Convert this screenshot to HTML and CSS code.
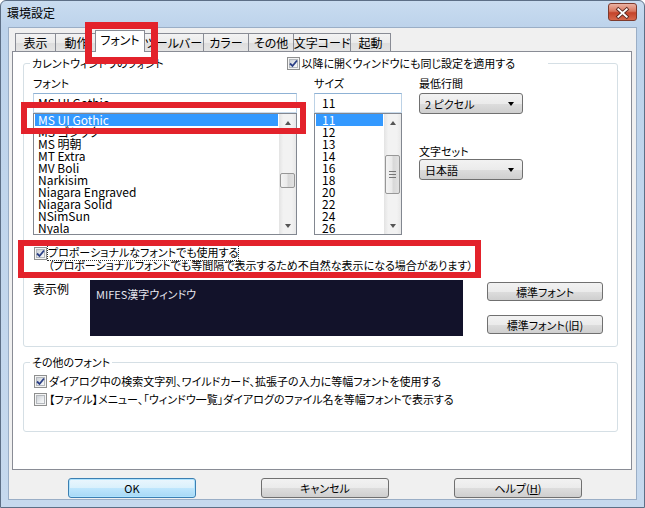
FILE: index.html
```html
<!DOCTYPE html>
<html lang="ja">
<head>
  <meta charset="UTF-8">
  <title>環境設定</title>
  <link rel="stylesheet" href="styles.css">
</head>
<body>
  <div class="window">
    <div class="titlebar">
      <span class="title">環境設定</span>
      <span class="close">
        <svg width="29" height="18" viewBox="0 0 29 18">
          <path d="M10 5 L19 13 M19 5 L10 13" stroke="#5a2a22" stroke-width="4" stroke-linecap="square"/>
          <path d="M10 5 L19 13 M19 5 L10 13" stroke="#fff" stroke-width="2" stroke-linecap="square"/>
        </svg>
      </span>
    </div>
    <div class="client">
      <div class="tabs">
        <div class="tab w1">表示</div>
        <div class="tab w2">動作</div>
        <div class="tab w3 active">フォント</div>
        <div class="tab w4">ツールバー</div>
        <div class="tab w5">カラー</div>
        <div class="tab w6">その他</div>
        <div class="tab w7">文字コード</div>
        <div class="tab w8">起動</div>
      </div>
      <div class="panel">
        <div class="group g1">
          <div class="group-head wide">
            <span class="legend">カレントウィンドウのフォント</span>
            <label class="check">
              <span class="box checked"><svg width="9" height="9" viewBox="0 0 9 9"><path d="M1 4.5 L3.5 7 L8 1.5" fill="none" stroke="#2b3f86" stroke-width="1.8"/></svg></span>
              以降に開くウィンドウにも同じ設定を適用する
            </label>
          </div>
          <div class="font-grid">
            <div class="col">
              <div class="lbl">フォント</div>
              <div class="edit">MS UI Gothic</div>
              <div class="listbox">
                <div class="items">
                  <div class="item sel">MS UI Gothic</div>
                  <div class="item">MS ゴシック</div>
                  <div class="item">MS 明朝</div>
                  <div class="item">MT Extra</div>
                  <div class="item">MV Boli</div>
                  <div class="item">Narkisim</div>
                  <div class="item">Niagara Engraved</div>
                  <div class="item">Niagara Solid</div>
                  <div class="item">NSimSun</div>
                  <div class="item">Nyala</div>
                </div>
                <div class="vscroll">
                  <div class="arrow up"></div>
                  <div class="track"><div class="thumb small"></div></div>
                  <div class="arrow down"></div>
                </div>
              </div>
            </div>
            <div class="col">
              <div class="lbl">サイズ</div>
              <div class="edit num">11</div>
              <div class="listbox">
                <div class="items nums">
                  <div class="item sel">11</div>
                  <div class="item">12</div>
                  <div class="item">13</div>
                  <div class="item">14</div>
                  <div class="item">16</div>
                  <div class="item">18</div>
                  <div class="item">20</div>
                  <div class="item">22</div>
                  <div class="item">24</div>
                  <div class="item">26</div>
                </div>
                <div class="vscroll">
                  <div class="arrow up"></div>
                  <div class="track"><div class="thumb big"><span class="grip"></span></div></div>
                  <div class="arrow down"></div>
                </div>
              </div>
            </div>
            <div class="col">
              <div class="lbl">最低行間</div>
              <div class="combo">2 ピクセル</div>
              <div class="lbl second">文字セット</div>
              <div class="combo">日本語</div>
            </div>
          </div>
          <div class="prop">
            <span class="box checked"><svg width="9" height="9" viewBox="0 0 9 9"><path d="M1 4.5 L3.5 7 L8 1.5" fill="none" stroke="#2b3f86" stroke-width="1.8"/></svg></span>
            <div class="prop-text">
              <div><span class="focus">プロポーショナルなフォントでも使用する</span></div>
              <div>（プロポーショナルフォントでも等間隔で表示するため不自然な表示になる場合があります）</div>
            </div>
          </div>
          <div class="sample-row">
            <div class="sample-lbl">表示例</div>
            <div class="sample">MIFES漢字ウィンドウ</div>
            <div class="side-btns">
              <div class="btn">標準フォント</div>
              <div class="btn">標準フォント(旧)</div>
            </div>
          </div>
        </div>
        <div class="group g2">
          <div class="group-head">
            <span class="legend">その他のフォント</span>
          </div>
          <label class="check row">
            <span class="box checked"><svg width="9" height="9" viewBox="0 0 9 9"><path d="M1 4.5 L3.5 7 L8 1.5" fill="none" stroke="#2b3f86" stroke-width="1.8"/></svg></span>
            ダイアログ中の検索文字列、ワイルドカード、拡張子の入力に等幅フォントを使用する
          </label>
          <label class="check row">
            <span class="box"></span>
            【ファイル】メニュー、「ウィンドウ一覧」ダイアログのファイル名を等幅フォントで表示する
          </label>
        </div>
      </div>
      <div class="buttons">
        <div class="btn big default">OK</div>
        <div class="btn big">キャンセル</div>
        <div class="btn big">ヘルプ(<u>H</u>)</div>
      </div>
    </div>
    <div class="mark m1"></div>
    <div class="mark m2"></div>
    <div class="mark m3"></div>
  </div>
</body>
</html>
```

FILE: styles.css
```css
:root {
  --frame: #c4d8ee;
  --client: #f0f0f0;
  --tab-border: #898c95;
  --group-border: #d5dfe5;
  --select: #3399ff;
  --red: #e3222b;
}
body {
  margin: 0;
  width: 645px;
  height: 508px;
  overflow: hidden;
  font-family: "Noto Sans CJK JP", "Liberation Sans", sans-serif;
  font-size: 11px;
  font-feature-settings: "palt" 1;
  color: #000;
}
.window {
  position: relative;
  width: 645px;
  height: 508px;
  box-sizing: border-box;
  border: 1px solid #5d6f86;
  border-radius: 6px 6px 0 0;
  background: linear-gradient(#c9dcf0, #bdd3eb 26px, #c6d9ee);
  padding: 0 7px 7px 7px;
  display: flex;
  flex-direction: column;
}
.titlebar {
  height: 26px;
  display: flex;
  justify-content: space-between;
}
.title {
  font-size: 12px;
  line-height: 24px;
  margin-left: -1px;
}
.close {
  width: 29px;
  height: 18px;
  margin-top: 2px;
  box-sizing: border-box;
  border: 1px solid #7e3a2c;
  border-radius: 3px;
  background: linear-gradient(#eab2a3, #d9775f 45%, #c4432a 55%, #d6684b);
  display: flex;
}
.client {
  flex: 1;
  background: var(--client);
  border: 1px solid #9aaec6;
  padding: 3px 4px 0 3px;
  display: flex;
  flex-direction: column;
}

/* tabs */
.tabs {
  display: flex;
  align-items: flex-end;
  height: 20px;
  padding-left: 3px;
  position: relative;
  z-index: 1;
}
.tab {
  height: 18px;
  box-sizing: border-box;
  border: 1px solid var(--tab-border);
  border-bottom: none;
  border-right: none;
  background: linear-gradient(#f3f3f3, #ebebeb 50%, #dddddd 51%, #e4e4e4);
  display: flex;
  align-items: center;
  justify-content: center;
  line-height: 14px;
  font-size: 12px;
  white-space: nowrap;
}
.tab.w8 { border-right: 1px solid var(--tab-border); }
.w1 { width: 40px; }
.w2 { width: 42px; }
.w3 { width: 47px; }
.w4 { width: 59px; }
.w5 { width: 45px; }
.w6 { width: 45px; }
.w7 { width: 57px; }
.w8 { width: 41px; }
.tab.active {
  width: 50px;
  height: 22px;
  margin: 0 -1px -1px -2px;
  background: #fff;
  border-right: 1px solid var(--tab-border);
  position: relative;
  align-items: flex-start;
  padding-top: 2px;
}
.tab.active + .tab { border-left: none; }

.panel {
  height: 419px;
  box-sizing: border-box;
  border: 1px solid var(--tab-border);
  background: #fff;
  padding: 11px 13px 0 10px;
}

/* group boxes */
.group {
  border: 1px solid var(--group-border);
  border-radius: 3px;
  padding: 0 0 0 9px;
}
.group-head {
  height: 14px;
  margin: -8px 0 0 -3px;
  line-height: 14px;
  display: flex;
}
.group-head.wide {
  width: 518px;
  background: #fff;
}
.legend {
  background: #fff;
  padding: 0 2px;
}
.group-head .check {
  margin-left: 121px;
}
.check {
  display: flex;
  align-items: center;
  gap: 2px;
}
.box {
  width: 13px;
  height: 13px;
  flex: none;
  box-sizing: border-box;
  border: 1px solid #8e8f8f;
  background: #f4f4f4;
  position: relative;
}
.box::before {
  content: "";
  position: absolute;
  inset: 1px;
  border: 1px solid #b4b8bd;
  background: linear-gradient(135deg, #cdd1d6, #eef0f2 70%, #f8f8f8);
}
.box svg {
  position: absolute;
  left: 1px;
  top: 1px;
}

.g1 { height: 284px; box-sizing: border-box; }
.font-grid {
  display: grid;
  grid-template-columns: 264px 88px 104px;
  column-gap: 17px;
  margin-top: 6px;
}
.lbl {
  height: 17px;
  line-height: 14px;
}
.lbl.second {
  margin-top: 30px;
  height: 15px;
}
.edit {
  height: 20px;
  box-sizing: border-box;
  border: 1px solid;
  border-color: #8fb2d5 #bcd2e6 #c9dbec #bcd2e6;
  padding: 0 4px;
  line-height: 18px;
  font-size: 12px;
  background: #fff;
}
.edit.num { padding-left: 7px; }
.listbox {
  height: 122px;
  box-sizing: border-box;
  border: 1px solid #828790;
  display: flex;
  background: #fff;
}
.items {
  flex: 1;
  padding: 0 1px;
  overflow: hidden;
  font-size: 12px;
}
.item {
  height: 12px;
  line-height: 12px;
  padding-left: 3px;
  white-space: nowrap;
}
.nums .item { padding-left: 6px; }
.item.sel {
  background: var(--select);
  color: #fff;
}
.vscroll {
  width: 17px;
  display: flex;
  flex-direction: column;
  background: linear-gradient(to right, #e3e3e3, #f2f2f2 25%, #f2f2f2 75%, #e8e8e8);
}
.arrow {
  height: 17px;
  display: flex;
  align-items: center;
  justify-content: center;
}
.arrow::after {
  content: "";
  border-left: 3.5px solid transparent;
  border-right: 3.5px solid transparent;
}
.arrow.up::after { border-bottom: 4px solid #555; }
.arrow.down::after { border-top: 4px solid #555; }
.track {
  flex: 1;
  padding: 0 1px;
}
.thumb {
  box-sizing: border-box;
  border: 1px solid #979797;
  border-radius: 2px;
  background: linear-gradient(to right, #f3f3f3, #eaeaea 45%, #d8d8d8 55%, #e2e2e2);
  display: flex;
  align-items: center;
  justify-content: center;
}
.thumb.small { height: 15px; margin-top: 42px; }
.thumb.big { height: 39px; margin-top: 24px; }
.grip {
  width: 7px;
  height: 5px;
  border-top: 1px solid #777;
  border-bottom: 1px solid #777;
  position: relative;
}
.grip::after {
  content: "";
  position: absolute;
  left: 0;
  right: 0;
  top: 2px;
  border-top: 1px solid #777;
}
.combo {
  height: 21px;
  box-sizing: border-box;
  border: 1px solid #707070;
  border-radius: 3px;
  background: linear-gradient(#f2f2f2, #ebebeb 50%, #dddddd 51%, #cfcfcf);
  padding: 0 8px 0 5px;
  display: flex;
  align-items: center;
  justify-content: space-between;
}
.combo::after {
  content: "";
  border-left: 3.5px solid transparent;
  border-right: 3.5px solid transparent;
  border-top: 4px solid #000;
}

.prop {
  display: flex;
  gap: 1px;
  margin-top: 11px;
  margin-left: 1px;
}
.prop .box { margin-top: 1px; }
.prop-text { line-height: 13px; }
.focus { outline: 1px dotted #333; }
.sample-row {
  display: flex;
  margin-top: 8px;
}
.sample-lbl {
  width: 57px;
  padding-top: 2px;
  line-height: 14px;
  font-size: 12px;
}
.sample {
  width: 373px;
  height: 56px;
  box-sizing: border-box;
  background: #12122a;
  color: #e6e6ee;
  padding: 7px 6px;
  line-height: 14px;
}
.side-btns {
  margin-left: 24px;
  padding-top: 2px;
  display: flex;
  flex-direction: column;
  gap: 14px;
}
.btn {
  width: 116px;
  height: 19px;
  box-sizing: border-box;
  border: 1px solid #707070;
  border-radius: 3px;
  background: linear-gradient(#f2f2f2, #ebebeb 50%, #dddddd 51%, #cfcfcf);
  display: flex;
  align-items: center;
  justify-content: center;
}
.g2 {
  margin-top: 15px;
  height: 70px;
  box-sizing: border-box;
  padding-left: 10px;
}
.g2 .group-head { margin-left: -4px; }
.g2 .check.row {
  height: 18px;
}
.g2 .group-head + .check.row { margin-top: 3px; }

.buttons {
  display: flex;
  gap: 65px;
  padding-left: 56px;
  margin-top: 8px;
}
.btn.big {
  width: 128px;
  height: 20px;
}
.btn.default {
  border-color: #3c7fb1;
  background: linear-gradient(#eaf6fd, #d9f0fc 50%, #bee6fd 51%, #a7d9f5);
  box-shadow: inset 0 0 0 1px #aee3ff;
}

/* red annotation frames drawn over the dialog */
.mark {
  position: absolute;
  box-sizing: border-box;
  border: 6px solid var(--red);
  z-index: 5;
}
.m1 { left: 84px; top: 21px; width: 73px; height: 42px; border-width: 7px; }
.m2 { left: 20px; top: 101px; width: 285px; height: 32px; }
.m3 { left: 17px; top: 239px; width: 463px; height: 38px; }
```
